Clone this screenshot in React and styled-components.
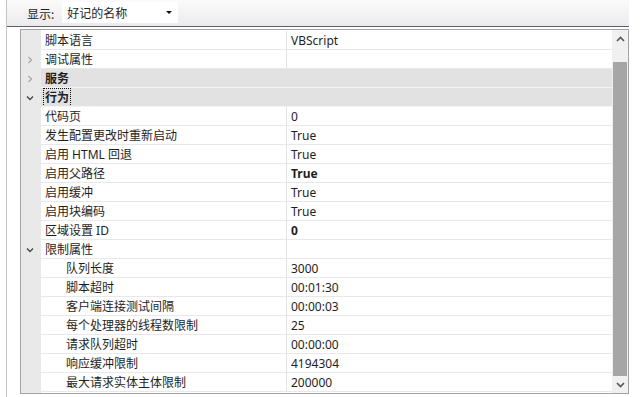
import React from "react";
import styled, { createGlobalStyle } from "styled-components";

const Global = createGlobalStyle`
  html, body {
    margin: 0;
    padding: 0;
    background: #ffffff;
    overflow: hidden;
  }
  body {
    font-family: "Noto Sans", "Noto Sans CJK SC", sans-serif;
    font-size: 12px;
    color: #1e1e1e;
  }
`;

const Page = styled.div`
  width: 640px;
  height: 397px;
  display: flex;
  padding-left: 6px;
  box-sizing: border-box;
`;

const Frame = styled.div`
  width: 623px;
  height: 397px;
  border-left: 1px solid #c4c4c4;
  display: flex;
  flex-direction: column;
  box-sizing: border-box;
`;

const Toolbar = styled.div`
  height: 27px;
  box-sizing: border-box;
  border-bottom: 1px solid #5d5d78;
  background: linear-gradient(#fbfbfb, #ebebeb);
  display: flex;
  align-items: center;
  padding-left: 20px;
  gap: 8px;
`;

const Label = styled.span`
  font-family: "Noto Sans CJK SC", sans-serif;
  font-size: 12px;
  color: #1e1e1e;
`;

const Combo = styled.div`
  width: 116px;
  height: 21px;
  margin-top: -2px;
  background: #ffffff;
  display: flex;
  align-items: center;
  justify-content: space-between;
  padding: 0 5px 0 5px;
  box-sizing: border-box;
  font-family: "Noto Sans CJK SC", sans-serif;
  font-size: 12px;
`;

const Caret = styled.span`
  width: 0;
  height: 0;
  border-left: 3px solid transparent;
  border-right: 3px solid transparent;
  border-top: 3px solid #111;
  margin-right: 1px;
`;

const Grid = styled.div`
  margin: 2px 0 3px 13px;
  flex: 1;
  border: 1px solid #a3a3a3;
  display: flex;
  overflow: hidden;
`;

const Rows = styled.div`
  flex: 1;
  display: flex;
  flex-direction: column;
  padding-top: 1px;
  background: linear-gradient(to right, #e9e9e9 20px, #ffffff 20px);
`;

const Row = styled.div`
  display: grid;
  grid-template-columns: 20px 246px 1fr;
  height: 19px;
  background: ${(p) => (p.$category ? "#e2e2e2" : "transparent")};
`;

const Gutter = styled.div`
  display: flex;
  align-items: center;
  justify-content: center;
  padding-right: 2px;
  background: #e9e9e9;
`;

const NameCell = styled.div`
  display: flex;
  align-items: center;
  padding-left: ${(p) => (p.$indent ? 25 : 4)}px;
  border-bottom: 1px solid ${(p) => (p.$category ? "#f4f4f4" : "#e8e8e8")};
  border-right: 1px solid ${(p) => (p.$category ? "#e2e2e2" : "#e3e3e3")};
  font-family: "Noto Sans", "Noto Sans CJK SC", sans-serif;
  font-weight: ${(p) => (p.$category ? 700 : 400)};
  white-space: nowrap;
  overflow: hidden;
`;

const Focus = styled.span`
  outline: 1px dotted #111;
  outline-offset: 0;
  padding: 0 1px;
  line-height: 17px;
  margin-left: -1px;
`;

const ValueCell = styled.div`
  display: flex;
  align-items: center;
  padding-left: 4px;
  border-bottom: 1px solid ${(p) => (p.$category ? "#f4f4f4" : "#e8e8e8")};
  font-family: "Noto Sans", "Noto Sans CJK SC", sans-serif;
  font-weight: ${(p) => (p.$bold ? 700 : 400)};
  white-space: nowrap;
`;

const Scroll = styled.div`
  width: 16px;
  background: #f0f0f0;
  display: flex;
  flex-direction: column;
`;

const ScrollBtn = styled.div`
  height: 17px;
  display: flex;
  align-items: center;
  justify-content: center;
`;

const Track = styled.div`
  flex: 1;
  display: flex;
  flex-direction: column;
  padding: 15px 1px 0 1px;
`;

const Thumb = styled.div`
  flex: 1;
  background: #a6a6a6;
`;

function Chevron({ open }) {
  return open ? (
    <svg width="8" height="6" viewBox="0 0 8 6">
      <path d="M1 1.5 L4 4.5 L7 1.5" fill="none" stroke="#4a4a4a" strokeWidth="1.4" />
    </svg>
  ) : (
    <svg width="6" height="8" viewBox="0 0 6 8">
      <path d="M1.5 1 L4.5 4 L1.5 7" fill="none" stroke="#a9a9a9" strokeWidth="1.3" />
    </svg>
  );
}

function Arrow({ up }) {
  return (
    <svg width="9" height="6" viewBox="0 0 9 6">
      <path
        d={up ? "M1 5 L4.5 1.5 L8 5" : "M1 1 L4.5 4.5 L8 1"}
        fill="none"
        stroke="#555"
        strokeWidth="1.6"
      />
    </svg>
  );
}

const rows = [
  { name: "脚本语言", value: "VBScript" },
  { name: "调试属性", value: "", toggle: "closed" },
  { name: "服务", category: true, toggle: "closed" },
  { name: "行为", category: true, toggle: "open", focus: true },
  { name: "代码页", value: "0" },
  { name: "发生配置更改时重新启动", value: "True" },
  { name: "启用 HTML 回退", value: "True" },
  { name: "启用父路径", value: "True", bold: true },
  { name: "启用缓冲", value: "True" },
  { name: "启用块编码", value: "True" },
  { name: "区域设置 ID", value: "0", bold: true },
  { name: "限制属性", value: "", toggle: "open" },
  { name: "队列长度", value: "3000", indent: true },
  { name: "脚本超时", value: "00:01:30", indent: true },
  { name: "客户端连接测试间隔", value: "00:00:03", indent: true },
  { name: "每个处理器的线程数限制", value: "25", indent: true },
  { name: "请求队列超时", value: "00:00:00", indent: true },
  { name: "响应缓冲限制", value: "4194304", indent: true },
  { name: "最大请求实体主体限制", value: "200000", indent: true },
];

export default function App() {
  return (
    <>
      <Global />
      <Page>
        <Frame>
          <Toolbar>
            <Label>显示:</Label>
            <Combo>
              <span>好记的名称</span>
              <Caret />
            </Combo>
          </Toolbar>
          <Grid>
            <Rows>
              {rows.map((r) => (
                <Row key={r.name} $category={r.category}>
                  <Gutter>{r.toggle && <Chevron open={r.toggle === "open"} />}</Gutter>
                  <NameCell $category={r.category} $indent={r.indent}>
                    {r.focus ? <Focus>{r.name}</Focus> : r.name}
                  </NameCell>
                  <ValueCell $category={r.category} $bold={r.bold}>
                    {r.value}
                  </ValueCell>
                </Row>
              ))}
            </Rows>
            <Scroll>
              <ScrollBtn>
                <Arrow up />
              </ScrollBtn>
              <Track>
                <Thumb />
              </Track>
              <ScrollBtn>
                <Arrow />
              </ScrollBtn>
            </Scroll>
          </Grid>
        </Frame>
      </Page>
    </>
  );
}
